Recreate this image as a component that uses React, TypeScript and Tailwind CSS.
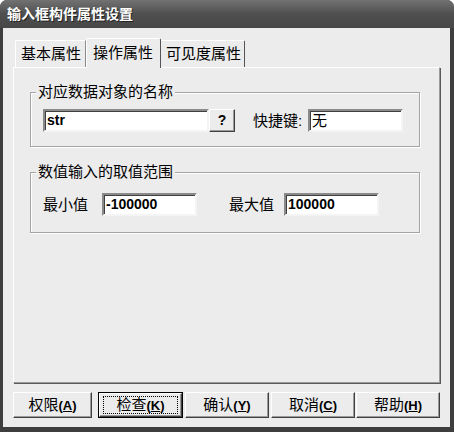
import React from "react";

const FONT = { fontFamily: '"Liberation Sans", "Noto Sans CJK SC", sans-serif' };

function Sunken({ w, children }: { w: string; children?: React.ReactNode }) {
  return (
    <div
      className={`${w} h-[23px] bg-white border-2 border-t-[#8a8a8a] border-l-[#8a8a8a] border-b-[#f4f4f4] border-r-[#f4f4f4] shadow-[inset_1px_1px_0_#404040] flex items-center pl-[2px] text-[15px] leading-[19px] text-black`}
    >
      {children}
    </div>
  );
}

function Btn({
  label,
  key1,
  w,
  ml,
  focused,
}: {
  label: string;
  key1: string;
  w: string;
  ml: string;
  focused?: boolean;
}) {
  const inner = (
    <div className="w-full h-full border border-t-white border-l-white border-r-[#404040] border-b-[#404040] shadow-[inset_-1px_-1px_0_#9a9a9a] bg-[#ececec] flex items-center justify-center relative">
      {focused && (
        <div className="absolute left-[3px] right-[3px] top-[2px] bottom-[2px] border border-dotted border-black" />
      )}
      <span className="text-[15px] leading-[19px] text-black">
        {label}
        <span className="font-bold text-[13px]">
          (<span className="underline">{key1}</span>)
        </span>
      </span>
    </div>
  );
  return (
    <div className={`${w} ${ml} h-[26px] ${focused ? "border border-black" : ""}`}>{inner}</div>
  );
}

export default function App() {
  return (
    <div className="w-[454px] h-[432px] bg-white" style={FONT}>
      <div className="w-[454px] h-[432px] bg-[#3e3e3e] rounded-t-[7px] flex flex-col overflow-hidden">
        <div className="h-[28px] shrink-0 bg-linear-to-b from-[#727272] via-[#4f4f4f] to-[#474747] flex items-center pl-[7px]">
          <span className="text-white font-bold text-[14px] leading-[18px] [text-shadow:1px_1px_0_#222]">
            输入框构件属性设置
          </span>
        </div>
        <div className="flex-1 ml-[3px] mr-[4px] mb-[5px] bg-[#ececec] px-[10px] pt-[10px] flex flex-col">
          {/* tabs */}
          <div className="h-[29px] flex items-end pl-[2px]">
            <div className="w-[71px] h-[27px] border-t border-l border-r border-t-white border-l-white border-r-[#8a8a8a] rounded-tl-[2px] flex items-center pl-[5px] text-[15px] leading-[20px] text-black">
              基本属性
            </div>
            <div className="w-[75px] h-[30px] mb-[-1px] relative z-10 bg-[#ececec] border-t border-l border-r border-t-white border-l-white border-r-[#555] rounded-t-[2px] flex items-center pl-[6px] pb-[2px] text-[15px] leading-[20px] text-black">
              操作属性
            </div>
            <div className="w-[84px] h-[27px] border-t border-r border-t-white border-r-[#555] rounded-tr-[2px] flex items-center pl-[5px] text-[15px] leading-[20px] text-black">
              可见度属性
            </div>
          </div>
          {/* panel */}
          <div className="h-[316px] border border-t-white border-l-white border-r-[#9a9a9a] border-b-[#9a9a9a] shadow-[1px_1px_0_#5a5a5a] pl-[16px] pt-[24px]">
            <div className="relative w-[390px] h-[55px] border border-[#a4a4a4] shadow-[1px_1px_0_#fff,inset_1px_1px_0_#fff] pl-[12px] pt-[16px]">
              <span className="absolute top-[-11px] left-[5px] px-[2px] bg-[#ececec] text-[15px] leading-[20px] text-black">
                对应数据对象的名称
              </span>
              <div className="flex items-center">
                <Sunken w="w-[166px]">
                  <span className="font-bold text-[14px]">str</span>
                </Sunken>
                <div className="w-[26px] h-[23px] border border-t-white border-l-white border-r-[#404040] border-b-[#404040] shadow-[inset_-1px_-1px_0_#9a9a9a] flex items-center justify-center font-bold text-[14px] text-black">
                  ?
                </div>
                <span className="ml-[18px] w-[55px] text-[15px] leading-[20px] text-black">快捷键:</span>
                <Sunken w="w-[95px]">无</Sunken>
              </div>
            </div>
            <div className="relative mt-[25px] w-[390px] h-[61px] border border-[#a4a4a4] shadow-[1px_1px_0_#fff,inset_1px_1px_0_#fff] pl-[12px] pt-[20px]">
              <span className="absolute top-[-11px] left-[5px] px-[2px] bg-[#ececec] text-[15px] leading-[20px] text-black">
                数值输入的取值范围
              </span>
              <div className="flex items-center">
                <span className="w-[59px] text-[15px] leading-[20px] text-black">最小值</span>
                <Sunken w="w-[95px]">
                  <span className="font-bold text-[14px]">-100000</span>
                </Sunken>
                <span className="ml-[32px] w-[55px] text-[15px] leading-[20px] text-black">最大值</span>
                <Sunken w="w-[95px]">
                  <span className="font-bold text-[14px]">100000</span>
                </Sunken>
              </div>
            </div>
          </div>
          {/* buttons */}
          <div className="mt-[9px] flex">
            <Btn label="权限" key1="A" w="w-[79px]" ml="" />
            <Btn label="检查" key1="K" w="w-[85px]" ml="ml-[6px]" focused />
            <Btn label="确认" key1="Y" w="w-[84px]" ml="ml-[2px]" />
            <Btn label="取消" key1="C" w="w-[84px]" ml="ml-[2px]" />
            <Btn label="帮助" key1="H" w="w-[84px]" ml="ml-[1px]" />
          </div>
        </div>
      </div>
    </div>
  );
}
